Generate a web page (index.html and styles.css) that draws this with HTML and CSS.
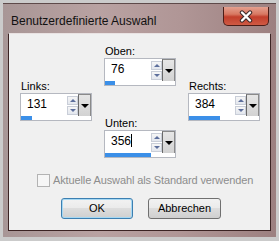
FILE: index.html
```html
<!DOCTYPE html>
<html lang="de">
<head>
  <meta charset="UTF-8" />
  <title>Benutzerdefinierte Auswahl</title>
  <link rel="stylesheet" href="styles.css">
</head>
<body>

  <div class="window">
    <div class="titlebar">
      <span class="title">Benutzerdefinierte Auswahl</span>
      <div class="close">
        <svg width="16" height="13" viewBox="0 0 16 13">
          <path d="M4 2.5 L12 10.5 M12 2.5 L4 10.5" stroke="#3a2a2a" stroke-width="4.4" stroke-linecap="round" fill="none" />
          <path d="M4 2.5 L12 10.5 M12 2.5 L4 10.5" stroke="#ffffff" stroke-width="2.4" stroke-linecap="round" fill="none" />
        </svg>
      </div>
    </div>

    <div class="client">
      <div class="fields">
        <div class="col side">
          <div class="field">
            <div class="label">Links:</div>
            <div class="spin">
              <div class="row">
                <div class="value">131</div>
                <div class="arrows"><span class="up"></span><span class="down"></span></div>
                <div class="drop"><span></span></div>
              </div>
              <div class="track"><div class="bar" style="width: 11px"></div></div>
            </div>
          </div>
        </div>

        <div class="col center">
          <div class="field">
            <div class="label">Oben:</div>
            <div class="spin">
              <div class="row">
                <div class="value">76</div>
                <div class="arrows"><span class="up"></span><span class="down"></span></div>
                <div class="drop"><span></span></div>
              </div>
              <div class="track"><div class="bar" style="width: 10px"></div></div>
            </div>
          </div>
          <div class="field lower">
            <div class="label">Unten:</div>
            <div class="spin">
              <div class="row">
                <div class="value">356<i class="caret"></i></div>
                <div class="arrows"><span class="up"></span><span class="down"></span></div>
                <div class="drop"><span></span></div>
              </div>
              <div class="track"><div class="bar" style="width: 46px"></div></div>
            </div>
          </div>
        </div>

        <div class="col side">
          <div class="field">
            <div class="label">Rechts:</div>
            <div class="spin">
              <div class="row">
                <div class="value">384</div>
                <div class="arrows"><span class="up"></span><span class="down"></span></div>
                <div class="drop"><span></span></div>
              </div>
              <div class="track"><div class="bar" style="width: 31px"></div></div>
            </div>
          </div>
        </div>
      </div>

      <div class="check">
        <span class="box"></span>
        <span class="text">Aktuelle Auswahl als Standard verwenden</span>
      </div>

      <div class="buttons">
        <div class="btn default">OK</div>
        <div class="btn">Abbrechen</div>
      </div>
    </div>
  </div>

</body>
</html>
```

FILE: styles.css
```css
body { margin: 0; background: #cbcbcb; font-family: "Liberation Sans", Arial, sans-serif; font-size: 11px; color: #000; }

.window { margin: 3px 0 0 3px; width: 273px; height: 234px; box-sizing: border-box; padding: 0 5px 6px 5px; border-top: 1px solid #5e4a4a; background: linear-gradient(90deg, #a89696 0%, #b9a2a2 35%, #b09696 65%, #9c8080 100%); display: flex; flex-direction: column; }

.titlebar { height: 29px; display: flex; justify-content: space-between; align-items: flex-start; padding-top: 3px; box-sizing: border-box; }
.title { font-size: 12px; line-height: 15px; margin: 7px 0 0 3px; color: #111; }
.close { width: 46px; height: 19px; margin-right: 2px; box-sizing: border-box; border: 1px solid #4b1d17; border-top: none; border-radius: 0 0 5px 5px; background: linear-gradient(#e4a08f 0%, #d87862 40%, #c23f2c 55%, #cf5a44 100%); display: flex; align-items: center; justify-content: center; }

.client { flex: 1; background: #f0f0f0; border: 1px solid #3b2323; border-top-color: #e9e2e2; padding: 10px 0 0 11px; }

.fields { display: flex; gap: 12px; }
.side { padding-top: 35px; }
.lower { margin-top: 30px; }
.label { line-height: 14px; padding-left: 1px; }

.spin { width: 72px; height: 28px; box-sizing: border-box; border: 1px solid #b5b8c0; background: #fff; }
.row { display: flex; height: 22px; }
.value { flex: 1; padding: 3px 0 0 6px; line-height: 14px; font-size: 12px; }
.caret { display: inline-block; width: 1px; height: 13px; background: #000; vertical-align: -2px; }
.arrows { width: 11px; padding: 2px 0 1px; display: flex; flex-direction: column; gap: 1px; }
.arrows span { flex: 1; border: 1px solid #c9ced8; background: linear-gradient(#f6f6f6, #e3e7ee); position: relative; }
.arrows span::after { content: ""; position: absolute; left: 2px; top: 2px; border-left: 3px solid transparent; border-right: 3px solid transparent; }
.arrows .up::after { border-bottom: 3px solid #5d6f9c; }
.arrows .down::after { border-top: 3px solid #5d6f9c; }
.drop { width: 13px; box-sizing: border-box; border-left: 1px solid #6a6a6a; border-top: 1px solid #8a8a8a; border-right: 1px solid #8a8a8a; background: linear-gradient(#e6e6e6, #d2d2d2); display: flex; align-items: center; justify-content: center; }
.drop span { border-left: 4px solid transparent; border-right: 4px solid transparent; border-top: 4px solid #000; }
.track { height: 4px; }
.bar { height: 4px; background: #3b8fe8; }

.check { display: flex; align-items: center; gap: 3px; margin: 16px 0 0 17px; color: #8d8d8d; line-height: 13px; }
.check .text { letter-spacing: -0.12px; }
.check .box { width: 13px; height: 13px; box-sizing: border-box; border: 1px solid #b3b3b3; background: #f6f6f6; }

.buttons { display: flex; gap: 15px; margin: 11px 0 0 41px; }
.btn { width: 73px; height: 21px; box-sizing: border-box; border: 1px solid #707070; border-radius: 3px; background: linear-gradient(#f2f2f2 0%, #ebebeb 45%, #dddddd 50%, #cfcfcf 100%); text-align: center; line-height: 19px; }
.btn.default { width: 72px; border-color: #3c7fb1; box-shadow: inset 0 0 0 1px #a6d8f3; }
```
